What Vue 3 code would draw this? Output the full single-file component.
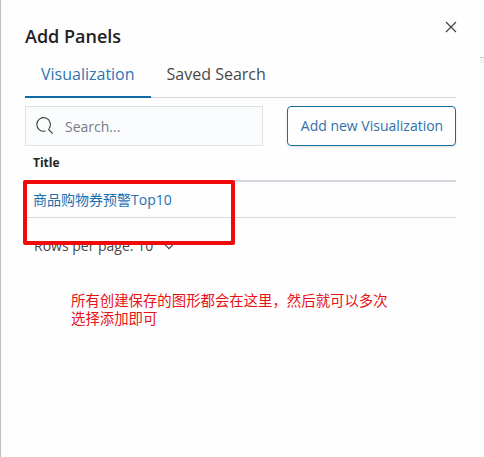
<script setup>
import { ref } from 'vue'

const tabs = ['Visualization', 'Saved Search']
const active = ref(0)
const search = ref('')
const rows = ['商品购物券预警Top10']
</script>

<template>
  <div class="flyout">
    <header class="header">
      <h1 class="title">Add Panels</h1>
      <button class="close" aria-label="Close">
        <svg width="12" height="12" viewBox="0 0 12 12"><path d="M1 1l10 10M11 1L1 11" /></svg>
      </button>
    </header>
    <nav class="tabs">
      <button
        v-for="(tab, i) in tabs"
        :key="tab"
        class="tab"
        :class="{ selected: active === i }"
        @click="active = i"
      >{{ tab }}</button>
    </nav>
    <div class="toolbar">
      <label class="search">
        <svg width="18" height="18" viewBox="0 0 18 18">
          <path d="M9.5 14A6.8 6.8 0 1 1 13 11.6M12.2 12L16.6 16.6" />
        </svg>
        <input v-model="search" placeholder="Search..." />
      </label>
      <button class="add">Add new Visualization</button>
    </div>
    <div class="table">
      <div class="th">Title</div>
      <div v-for="row in rows" :key="row" class="td">
        <a>{{ row }}</a>
      </div>
    </div>
    <div class="pager">
      <span>Rows per page: 10</span>
      <svg width="10" height="8" viewBox="0 0 10 8"><path d="M1 2.6l4 4 4-4" /></svg>
    </div>
    <p class="note">所有创建保存的图形都会在这里，然后就可以多次选择添加即可</p>
    <div class="highlight"></div>
    <div class="edge"></div>
  </div>
</template>

<style>
body {
  background: #fff;
}
</style>

<style scoped>
.flyout {
  position: relative;
  box-sizing: border-box;
  width: 484px;
  height: 457px;
  overflow: hidden;
  padding: 0 28px 0 24px;
  border-left: 1px solid #bdbdbd;
  background: #fefefe;
  color: #484848;
  font-family: "Open Sans", "Noto Sans CJK SC", sans-serif;
}
button {
  margin: 0;
  padding: 0;
  border: 0;
  background: none;
  font: inherit;
  color: inherit;
}
svg {
  display: block;
  flex: none;
  fill: none;
  stroke: #3f3f3f;
  stroke-width: 1.1;
}
.header {
  display: flex;
  justify-content: space-between;
  height: 58px;
}
.title {
  margin: 24px 0 0;
  font-size: 18px;
  line-height: 24px;
  font-weight: 600;
  color: #222;
}
.close {
  align-self: flex-start;
  margin: 21px -1px 0 0;
}
.tabs {
  display: flex;
  box-sizing: border-box;
  height: 40px;
  border-bottom: 1px solid #d5d9dd;
}
.tab {
  box-sizing: border-box;
  height: 40px;
  padding: 0 16px 6px;
  border-bottom: 2px solid transparent;
  font-size: 16px;
  line-height: 32px;
}
.tab.selected {
  color: #2e75b0;
  border-color: #0f6ba6;
}
.toolbar {
  display: flex;
  justify-content: space-between;
  margin-top: 8px;
}
.search {
  display: flex;
  align-items: center;
  box-sizing: border-box;
  width: 238px;
  height: 40px;
  padding-left: 10px;
  border: 1px solid #dde3e5;
  background: #fafcfd;
}
.search input {
  width: 160px;
  margin-left: 11px;
  padding: 0;
  border: 0;
  outline: 0;
  background: none;
  font: 14px "Open Sans", sans-serif;
  color: #3f3f3f;
}
.search input::placeholder {
  color: #777b82;
}
.add {
  box-sizing: border-box;
  width: 169px;
  height: 40px;
  padding: 0 0 2px 1px;
  border: 1px solid #1b6c9f;
  border-radius: 4px;
  box-shadow: 0 1px 2px rgba(30, 90, 130, 0.15);
  font-size: 14px;
  color: #2f70aa;
}
.th {
  box-sizing: border-box;
  height: 36px;
  padding: 7px 8px 0;
  border-bottom: 2px solid #d3d5df;
  font-size: 12px;
  line-height: 20px;
  font-weight: 700;
  color: #222;
}
.td {
  box-sizing: border-box;
  height: 36px;
  padding: 0 8px;
  border-bottom: 1px solid #d9d9dc;
  font-size: 14px;
  line-height: 35px;
  color: #1d70ae;
}
.pager {
  display: flex;
  align-items: center;
  gap: 11px;
  height: 20px;
  margin: 18px 0 0 9px;
  font-size: 14px;
  line-height: 20px;
}
.note {
  width: 320px;
  margin: 35px 0 0 46px;
  font: 14.4px/18px "Noto Sans CJK SC", sans-serif;
  color: #e81216;
}
.highlight {
  position: absolute;
  left: 22px;
  top: 180px;
  box-sizing: border-box;
  width: 212px;
  height: 65px;
  border: 4px solid #f00a0a;
  border-radius: 2px;
}
.edge {
  position: absolute;
  right: 0;
  top: 57px;
  width: 4px;
  height: 5px;
  border-top: 1px solid #ccc;
  background: #f3f3f3;
}
</style>
